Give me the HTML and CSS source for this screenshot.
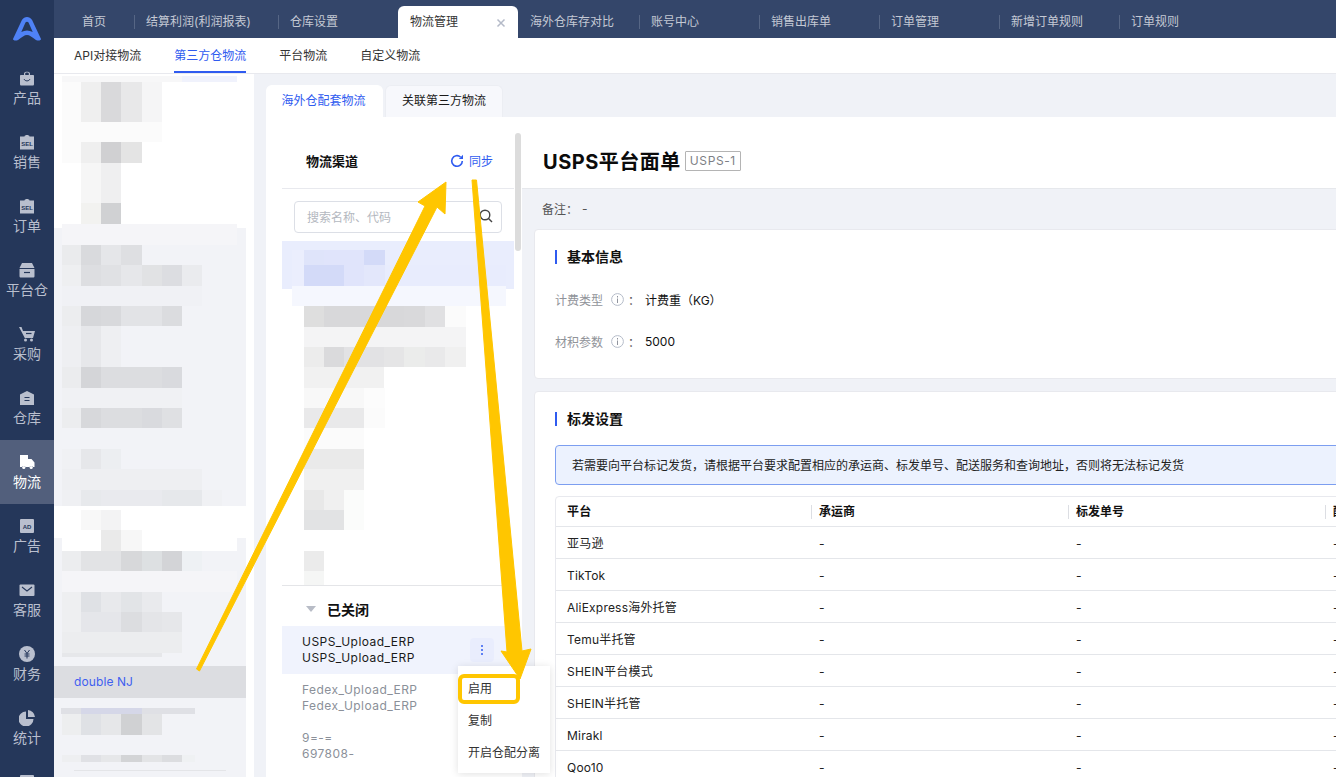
FILE: index.html
```html
<!DOCTYPE html>
<html lang="zh">
<head>
<meta charset="utf-8">
<title>物流管理</title>
<link rel="stylesheet" href="styles.css">
</head>
<body>
<div class="page">
  <aside class="sidebar">
    <div class="logo">
      <svg width="28" height="25" viewBox="3 0 22 25" preserveAspectRatio="none"><path d="M3 23 C3 24.500 5 25 7 24 C10 21 12 19 14 19 C16 19 18 21 21 24 C23 25 25 24.500 25 23 L18 4 C16 0 12 0 10 4 Z M9.500 16 L12.800 6.500 C13.300 5.500 14.700 5.500 15.200 6.500 L18.500 16 C17 15 15.500 14.500 14 14.500 C12.500 14.500 11 15 9.500 16 Z" fill="#4f82f7" fill-rule="evenodd"/></svg>
    </div>
    <a class="nav-item">
      <svg class="nav-icon" viewBox="0 0 16 16"><path d="M5 5 V3.500 C5 1 11 1 11 3.500 V5 H14 C14.600 5 15 5.400 15 6 V14 C15 15 14.500 15.500 13.500 15.500 H2.500 C1.500 15.500 1 15 1 14 V6 C1 5.400 1.400 5 2 5 Z M6.200 5 H9.800 V3.500 C9.800 2.300 6.200 2.300 6.200 3.500 Z" fill="currentColor" fill-rule="evenodd"/><path d="M5 9 C6 11.500 10 11.500 11 9" stroke="#25375a" fill="none"/></svg>
      <span>产品</span>
    </a>
    <a class="nav-item">
      <svg class="nav-icon" viewBox="0 0 16 16"><path d="M5.500 2.500 C5.500 .5 10.500 .5 10.500 2.500 H15 V15.500 H1 V2.500 Z" fill="currentColor"/><text x="8" y="11.500" class="icon-text">SEL</text></svg>
      <span>销售</span>
    </a>
    <a class="nav-item">
      <svg class="nav-icon" viewBox="0 0 16 16"><path d="M5.500 2.500 C5.500 .5 10.500 .5 10.500 2.500 H15 V15.500 H1 V2.500 Z" fill="currentColor"/><text x="8" y="11.500" class="icon-text">SEL</text></svg>
      <span>订单</span>
    </a>
    <a class="nav-item">
      <svg class="nav-icon" viewBox="0 0 16 16"><path d="M3 1 H13 L15.500 6 H.5 Z M.5 7 H15.500 V14 C15.500 15 15 15.500 14 15.500 H2 C1 15.500 .5 15 .5 14 Z" fill="currentColor"/><path d="M5 10.500 H11" stroke="#25375a" stroke-width="1.200"/></svg>
      <span>平台仓</span>
    </a>
    <a class="nav-item">
      <svg class="nav-icon" viewBox="0 0 16 16"><path d="M0 1 H2.500 L4 5 H16 L14 12 H5.800 Z" fill="currentColor"/><circle cx="6.500" cy="14" r="1.500" fill="currentColor"/><circle cx="12.500" cy="14" r="1.500" fill="currentColor"/><path d="M7 7.500 H12.500" stroke="#25375a" stroke-width="1.200"/></svg>
      <span>采购</span>
    </a>
    <a class="nav-item">
      <svg class="nav-icon" viewBox="0 0 16 16"><path d="M8 1 L15 4.500 V15 H1 V4.500 Z" fill="currentColor"/><path d="M5.500 7.500 H10.500 M5.500 10.500 H10.500" stroke="#25375a" stroke-width="1.100"/></svg>
      <span>仓库</span>
    </a>
    <a class="nav-item nav-active">
      <svg class="nav-icon" viewBox="0 0 16 16"><path d="M1 1 H9 V5 H12.500 L15.500 8.500 V13 H14 A2 2 0 0 0 10.500 13 H6.500 A2 2 0 0 0 3 13 H1 Z" fill="currentColor"/><circle cx="4.800" cy="13.500" r="1.600" fill="currentColor"/><circle cx="12.200" cy="13.500" r="1.600" fill="currentColor"/></svg>
      <span>物流</span>
    </a>
    <a class="nav-item">
      <svg class="nav-icon" viewBox="0 0 16 16"><rect x="1" y="1" width="14" height="14" rx="1" fill="currentColor"/><text x="8" y="10.500" class="icon-text">AD</text></svg>
      <span>广告</span>
    </a>
    <a class="nav-item">
      <svg class="nav-icon" viewBox="0 0 16 16"><rect x=".5" y="2.500" width="15" height="11.500" rx="1" fill="currentColor"/><path d="M3 5 L8 9 L13 5" stroke="#25375a" fill="none" stroke-width="1.100"/></svg>
      <span>客服</span>
    </a>
    <a class="nav-item">
      <svg class="nav-icon" viewBox="0 0 16 16"><circle cx="8" cy="8" r="8" fill="currentColor"/><path d="M5.500 4 L8 7.500 L10.500 4 M8 7.500 V12.500 M5.500 8 H10.500 M5.500 10 H10.500" stroke="#25375a" fill="none"/></svg>
      <span>财务</span>
    </a>
    <a class="nav-item">
      <svg class="nav-icon" viewBox="0 0 16 16"><path d="M7 1.500 V9 H14.500 A7.500 7.500 0 1 1 7 1.500 Z M9 0 A7.500 7.500 0 0 1 16 7 H9 Z" fill="currentColor"/></svg>
      <span>统计</span>
    </a>
    <a class="nav-item">
      <svg class="nav-icon" viewBox="0 0 16 16"><rect x="1" y="1" width="14" height="14" rx="1" fill="currentColor"/></svg>
    </a>
  </aside>

  <div class="app">
    <nav class="topbar">
      <a class="tab tab-home">首页</a>
      <a class="tab tab-wide tab-div">结算利润(利润报表)</a>
      <a class="tab tab-div">仓库设置</a>
      <a class="tab tab-active">物流管理
        <svg class="tab-close" width="10" height="10" viewBox="0 0 10 10"><path d="M1.500 1.500 L8.500 8.500 M8.500 1.500 L1.500 8.500" stroke="#b4bac8" stroke-width="1.500"/></svg>
      </a>
      <a class="tab">海外仓库存对比</a>
      <a class="tab tab-div">账号中心</a>
      <a class="tab tab-div">销售出库单</a>
      <a class="tab tab-div">订单管理</a>
      <a class="tab tab-div">新增订单规则</a>
      <a class="tab tab-div">订单规则</a>
    </nav>
    <nav class="subnav">
      <a class="sub-item">API对接物流</a>
      <a class="sub-item sub-active">第三方仓物流</a>
      <a class="sub-item">平台物流</a>
      <a class="sub-item">自定义物流</a>
    </nav>

    <div class="content">
      <section class="tree">
        <svg class="mosaic" width="192" height="592" viewBox="54 74 192 592" aria-hidden="true">
          <rect x="54" y="74" width="192" height="154" fill="#fff"/>
          <rect x="62" y="76" width="120" height="6" fill="#f7f7f8"/><rect x="182" y="76" width="55" height="6" fill="#f0f2fc"/>
          <rect x="62" y="82" width="20" height="40" fill="#fbfbfb"/><rect x="81" y="82" width="20" height="40" fill="#efefef"/><rect x="101" y="82" width="20" height="40" fill="#d9d9db"/><rect x="121" y="82" width="21" height="40" fill="#e8e8e9"/><rect x="142" y="82" width="20" height="40" fill="#f5f5f6"/>
          <rect x="62" y="122" width="100" height="20" fill="#fbfbfb"/>
          <rect x="62" y="142" width="20" height="21" fill="#fbfbfb"/><rect x="81" y="142" width="20" height="21" fill="#efefef"/><rect x="101" y="142" width="20" height="21" fill="#d0d0d2"/><rect x="121" y="142" width="21" height="21" fill="#e4e4e4"/>
          <rect x="81" y="163" width="20" height="40" fill="#f6f6f6"/><rect x="101" y="163" width="20" height="40" fill="#efeff0"/>
          <rect x="81" y="203" width="20" height="21" fill="#f2f2f0"/><rect x="101" y="203" width="20" height="21" fill="#d0d1d3"/>
          <rect x="62" y="224" width="175" height="21" fill="#f5f5f8"/>
          <rect x="62" y="245" width="19" height="20" fill="#eaebed"/><rect x="81" y="245" width="20" height="20" fill="#d9dadd"/><rect x="101" y="245" width="20" height="20" fill="#e5e6e9"/><rect x="121" y="245" width="21" height="20" fill="#dedfe2"/>
          <rect x="62" y="265" width="19" height="21" fill="#eeeff1"/><rect x="81" y="265" width="20" height="21" fill="#dddee1"/><rect x="101" y="265" width="20" height="21" fill="#e0e1e4"/><rect x="121" y="265" width="21" height="21" fill="#e6e7ea"/><rect x="142" y="265" width="20" height="21" fill="#e1e2e4"/><rect x="162" y="265" width="20" height="21" fill="#dcdde1"/><rect x="182" y="265" width="20" height="21" fill="#eaebee"/>
          <rect x="62" y="286" width="140" height="20" fill="#f0f1f5"/>
          <rect x="62" y="306" width="19" height="20" fill="#ecedef"/><rect x="81" y="306" width="20" height="20" fill="#d6d7da"/><rect x="101" y="306" width="20" height="20" fill="#d8d9dc"/><rect x="121" y="306" width="41" height="20" fill="#e2e3e6"/><rect x="162" y="306" width="20" height="20" fill="#dbdcdf"/>
          <rect x="62" y="326" width="19" height="41" fill="#eeeff2"/><rect x="81" y="326" width="20" height="41" fill="#e6e7ea"/><rect x="101" y="326" width="20" height="41" fill="#eeeff2"/>
          <rect x="62" y="367" width="19" height="21" fill="#ebecee"/><rect x="81" y="367" width="20" height="21" fill="#d4d5d8"/><rect x="101" y="367" width="61" height="21" fill="#dcdde0"/><rect x="162" y="367" width="20" height="21" fill="#d9dade"/>
          <rect x="62" y="388" width="120" height="20" fill="#f0f1f4"/>
          <rect x="62" y="408" width="19" height="20" fill="#ecedef"/><rect x="81" y="408" width="20" height="20" fill="#d7d8db"/><rect x="101" y="408" width="41" height="20" fill="#dcdde0"/><rect x="142" y="408" width="20" height="20" fill="#d9dade"/><rect x="162" y="408" width="20" height="20" fill="#dfe0e3"/>
          <rect x="62" y="449" width="19" height="20" fill="#f0f1f4"/><rect x="81" y="449" width="20" height="20" fill="#e6e7ea"/><rect x="101" y="449" width="20" height="20" fill="#eceef1"/>
          <rect x="62" y="469" width="140" height="21" fill="#eeeff2"/>
          <rect x="62" y="490" width="19" height="16" fill="#eff0f3"/><rect x="81" y="490" width="20" height="16" fill="#e7e9ec"/><rect x="101" y="490" width="61" height="16" fill="#e9eaee"/><rect x="162" y="490" width="40" height="16" fill="#e6e8eb"/><rect x="202" y="490" width="20" height="16" fill="#f0f1f4"/>
          <rect x="54" y="506" width="192" height="32" fill="#fff"/>
          <rect x="81" y="510" width="20" height="20" fill="#f8f8f8"/><rect x="101" y="510" width="20" height="20" fill="#f3f3f4"/>
          <rect x="62" y="538" width="175" height="13" fill="#fff"/>
          <rect x="101" y="530" width="20" height="21" fill="#eaeaea"/><rect x="121" y="530" width="21" height="21" fill="#f7f7f7"/>
          <rect x="62" y="551" width="19" height="20" fill="#ecedef"/><rect x="81" y="551" width="40" height="20" fill="#e2e3e5"/><rect x="121" y="551" width="21" height="20" fill="#d7d8da"/><rect x="142" y="551" width="20" height="20" fill="#dde0e2"/><rect x="162" y="551" width="20" height="20" fill="#d3d4d7"/><rect x="182" y="551" width="20" height="20" fill="#eef1f4"/>
          <rect x="62" y="571" width="175" height="21" fill="#f5f5f8"/>
          <rect x="62" y="592" width="19" height="20" fill="#eeeff1"/><rect x="81" y="592" width="20" height="20" fill="#dfe1e5"/><rect x="101" y="592" width="20" height="20" fill="#e8e9ec"/><rect x="121" y="592" width="21" height="20" fill="#e2e4e7"/><rect x="142" y="592" width="20" height="20" fill="#e9eaed"/>
          <rect x="62" y="612" width="19" height="20" fill="#eeeff1"/><rect x="81" y="612" width="40" height="20" fill="#e5e6ea"/><rect x="121" y="612" width="21" height="20" fill="#dcdde0"/><rect x="142" y="612" width="20" height="20" fill="#e4e5e8"/><rect x="162" y="612" width="20" height="20" fill="#e6e7ea"/>
          <rect x="62" y="632" width="120" height="21" fill="#ecedef"/><rect x="62" y="653" width="100" height="4" fill="#e6e7ea"/>
        </svg>
        <div class="tree-row">double NJ</div>
        <svg class="mosaic" width="192" height="79" viewBox="54 698 192 79" aria-hidden="true">
          <rect x="61" y="708" width="134" height="6" fill="#dfe0e5"/><rect x="81" y="708" width="61" height="6" fill="#d5d7e8"/>
          <rect x="62" y="714" width="19" height="21" fill="#edeeef"/><rect x="81" y="714" width="20" height="21" fill="#dfe1e5"/><rect x="101" y="714" width="20" height="21" fill="#e6e7e9"/><rect x="121" y="714" width="21" height="21" fill="#d0d1d3"/><rect x="142" y="714" width="20" height="21" fill="#e3e4e6"/>
          <rect x="62" y="755" width="19" height="7" fill="#eeeff1"/><rect x="81" y="755" width="20" height="7" fill="#e0e1e5"/><rect x="101" y="755" width="20" height="7" fill="#e6e7e9"/><rect x="121" y="755" width="21" height="7" fill="#d3d4d6"/><rect x="142" y="755" width="20" height="7" fill="#e3e4e6"/><rect x="162" y="755" width="20" height="7" fill="#dcdde0"/><rect x="182" y="755" width="13" height="7" fill="#eff1f3"/>
          <rect x="74" y="770" width="152" height="1" fill="#e4e5e8"/>
        </svg>
      </section>

      <main class="main">
        <div class="panel-tabs">
          <a class="ptab ptab-active">海外仓配套物流</a>
          <a class="ptab">关联第三方物流</a>
        </div>
        <div class="panel">
          <section class="channels">
            <div class="scrollbar"></div>
            <header class="ch-head">
              <h3 class="ch-title">物流渠道</h3>
              <a class="sync">
                <svg width="14" height="14" viewBox="0 0 14 14"><path d="M12.300 7 A5.300 5.300 0 1 1 10.500 3" fill="none" stroke="#2f5bf0" stroke-width="1.600"/><path d="M13 .8 V5 H8.800 Z" fill="#2f5bf0"/></svg>
                同步
              </a>
            </header>
            <div class="search">
              <span class="search-ph">搜索名称、代码</span>
              <svg width="14" height="14" viewBox="0 0 14 14"><circle cx="6" cy="6" r="4.800" fill="none" stroke="#444" stroke-width="1.400"/><path d="M9.500 9.500 L13 13" stroke="#444" stroke-width="1.400"/></svg>
            </div>
            <svg class="mosaic ch-mosaic" width="232" height="344" viewBox="282 241 232 344" aria-hidden="true">
              <rect x="282" y="241" width="232" height="48" fill="#e9edfd"/>
              <rect x="292" y="250" width="12" height="36" fill="#ebeefd"/>
              <rect x="304" y="250" width="20" height="15" fill="#dfe4fa"/><rect x="324" y="250" width="40" height="15" fill="#e0e4fb"/><rect x="364" y="250" width="21" height="15" fill="#d3daf8"/>
              <rect x="304" y="265" width="40" height="21" fill="#d3daf8"/><rect x="344" y="265" width="20" height="21" fill="#e0e4fb"/><rect x="364" y="265" width="21" height="21" fill="#e3e7fb"/><rect x="385" y="265" width="121" height="21" fill="#e8ecfd"/>
              <rect x="292" y="286" width="214" height="20" fill="#f5f7fe"/>
              <rect x="304" y="306" width="20" height="21" fill="#dedede"/><rect x="324" y="306" width="80" height="21" fill="#d8d8da"/><rect x="404" y="306" width="21" height="21" fill="#d9d9db"/><rect x="425" y="306" width="20" height="21" fill="#e0e0e2"/><rect x="445" y="306" width="21" height="21" fill="#fbfbfb"/>
              <rect x="304" y="327" width="162" height="20" fill="#f4f4f5"/>
              <rect x="304" y="347" width="20" height="20" fill="#ececec"/><rect x="324" y="347" width="20" height="20" fill="#dadadc"/><rect x="344" y="347" width="40" height="20" fill="#e2e2e4"/><rect x="384" y="347" width="20" height="20" fill="#e5e5e6"/><rect x="404" y="347" width="21" height="20" fill="#ebeceb"/><rect x="425" y="347" width="20" height="20" fill="#e9e9ea"/><rect x="445" y="347" width="21" height="20" fill="#f0f0f0"/>
              <rect x="304" y="367" width="80" height="21" fill="#f1f1f1"/>
              <rect x="304" y="388" width="60" height="20" fill="#f8f8f8"/><rect x="364" y="388" width="21" height="20" fill="#fcfcfc"/>
              <rect x="304" y="408" width="60" height="20" fill="#e9e9ea"/><rect x="364" y="408" width="21" height="20" fill="#fbfbfb"/>
              <rect x="304" y="428" width="60" height="21" fill="#fbfbfb"/>
              <rect x="304" y="449" width="60" height="20" fill="#eaeaea"/>
              <rect x="304" y="469" width="60" height="21" fill="#f0f0f0"/>
              <rect x="304" y="490" width="20" height="20" fill="#e8e8e8"/><rect x="324" y="490" width="20" height="20" fill="#f0f0f0"/><rect x="344" y="490" width="20" height="20" fill="#fbfcfb"/>
              <rect x="304" y="510" width="40" height="20" fill="#e2e3e4"/><rect x="344" y="510" width="20" height="20" fill="#fbfcfb"/>
              <rect x="304" y="551" width="20" height="20" fill="#ebebeb"/>
              <rect x="304" y="571" width="20" height="14" fill="#f5f6f5"/>
            </svg>
            <div class="closed-head">
              <svg width="10" height="6" viewBox="0 0 10 6"><path d="M0 0 H10 L5 6 Z" fill="#b8bcc6"/></svg>
              <strong>已关闭</strong>
            </div>
            <div class="ch-row ch-row-on">
              <div>USPS_Upload_ERP<br>USPS_Upload_ERP</div>
              <span class="more"><i></i><i></i><i></i></span>
            </div>
            <div class="ch-row ch-row-off">
              <div>Fedex_Upload_ERP<br>Fedex_Upload_ERP</div>
            </div>
            <div class="ch-row ch-row-off">
              <div>9=-=<br>697808-</div>
            </div>
            <ul class="menu">
              <li>启用</li>
              <li>复制</li>
              <li>开启仓配分离</li>
            </ul>
          </section>

          <section class="detail">
            <header class="d-head">
              <h1 class="d-title">USPS平台面单</h1>
              <span class="d-tag">USPS-1</span>
            </header>
            <div class="d-note"><span>备注：</span><span class="d-note-val">-</span></div>
            <div class="card card-basic">
              <h2 class="sec-title">基本信息</h2>
              <div class="field">
                <span class="f-label">计费类型</span>
                <svg class="info" width="13" height="13" viewBox="0 0 13 13"><circle cx="6.500" cy="6.500" r="5.900" fill="none" stroke="#b5bcc9"/><path d="M6.500 5.500 V10 M6.500 3 V4.500" stroke="#8f939d"/></svg>
                <span class="f-colon">：</span>
                <span class="f-val">计费重（KG）</span>
              </div>
              <div class="field">
                <span class="f-label">材积参数</span>
                <svg class="info" width="13" height="13" viewBox="0 0 13 13"><circle cx="6.500" cy="6.500" r="5.900" fill="none" stroke="#b5bcc9"/><path d="M6.500 5.500 V10 M6.500 3 V4.500" stroke="#8f939d"/></svg>
                <span class="f-colon">：</span>
                <span class="f-val">5000</span>
              </div>
            </div>
            <div class="card card-mark">
              <h2 class="sec-title">标发设置</h2>
              <div class="alert">若需要向平台标记发货，请根据平台要求配置相应的承运商、标发单号、配送服务和查询地址，否则将无法标记发货</div>
              <table class="grid">
                <thead>
                  <tr><th>平台</th><th>承运商</th><th>标发单号</th><th>配送服务</th></tr>
                </thead>
                <tbody>
                  <tr><td>亚马逊</td><td>-</td><td>-</td><td>-</td></tr>
                  <tr><td>TikTok</td><td>-</td><td>-</td><td>-</td></tr>
                  <tr><td>AliExpress海外托管</td><td>-</td><td>-</td><td>-</td></tr>
                  <tr><td>Temu半托管</td><td>-</td><td>-</td><td>-</td></tr>
                  <tr><td>SHEIN平台模式</td><td>-</td><td>-</td><td>-</td></tr>
                  <tr><td>SHEIN半托管</td><td>-</td><td>-</td><td>-</td></tr>
                  <tr><td>Mirakl</td><td>-</td><td>-</td><td>-</td></tr>
                  <tr><td>Qoo10</td><td>-</td><td>-</td><td>-</td></tr>
                </tbody>
              </table>
            </div>
          </section>
        </div>
      </main>
    </div>
  </div>

  <svg class="annot" width="1336" height="777" viewBox="0 0 1336 777" aria-hidden="true">
    <path d="M196.500 669 L199.500 671 L437 207 L445 214 L446 182 L418 202 L425 206 Z" fill="#ffc600" stroke="#ffc600" stroke-linejoin="round"/>
    <path d="M472 180 H476.500 L522 651 L531 649 L520 679 L501 651 L507 652 Z" fill="#ffc600" stroke="#ffc600" stroke-linejoin="round"/>
    <rect x="460" y="676" width="58" height="26" rx="4" fill="none" stroke="#ffc600" stroke-width="4"/>
  </svg>
</div>
</body>
</html>
```

FILE: styles.css
```css
* { box-sizing: border-box; }
html, body { margin: 0; padding: 0; height: 100%; overflow: hidden; }
body {
  font-family: Inter, "Noto Sans CJK SC", sans-serif;
  font-size: 12px;
  color: #1a1a1a;
  background: #fff;
}
a { text-decoration: none; color: inherit; cursor: pointer; }
h1, h2, h3 { margin: 0; }

.page { position: relative; display: flex; width: 1336px; height: 777px; overflow: hidden; }

/* sidebar */
.sidebar {
  flex: 0 0 54px;
  background: #25375a;
  color: #b9bfce;
  overflow: hidden;
}
.logo { height: 56px; display: flex; justify-content: center; padding-top: 16px; }
.nav-item {
  height: 64px;
  display: flex;
  flex-direction: column;
  align-items: center;
  padding-top: 14px;
  font-size: 14px;
  line-height: 20px;
  gap: 2px;
}
.nav-active { background: #525f7c; color: #fff; }
.nav-icon { width: 16px; height: 16px; display: block; }
.icon-text { font: 700 6px "Liberation Sans", sans-serif; fill: #25375a; text-anchor: middle; }

/* top */
.app { flex: 1; min-width: 0; display: flex; flex-direction: column; }
.topbar {
  flex: 0 0 38px;
  display: flex;
  align-items: flex-end;
  background: #34466a;
  padding-left: 16px;
  color: #c4c9d4;
}
.tab {
  position: relative;
  flex: 0 0 120px;
  height: 32px;
  padding-left: 12px;
  line-height: 32px;
  font-size: 12px;
}
.tab-home { flex-basis: 64px; }
.tab-wide { flex-basis: 144px; }
.tab-active + .tab { flex-basis: 121px; }
.tab-div::before {
  content: "";
  position: absolute;
  left: 0;
  top: 9px;
  height: 14px;
  width: 1px;
  background: #566685;
}
.tab-active { background: #fff; color: #333; border-radius: 6px 6px 0 0; }
.tab-close { position: absolute; right: 12px; top: 12px; }

.subnav {
  flex: 0 0 36px;
  display: flex;
  gap: 33px;
  padding-left: 20px;
  background: #fff;
  border-bottom: 1px solid #e8e9ee;
}
.sub-item { height: 35px; line-height: 36px; font-size: 12px; color: #333; }
.sub-active { color: #2f5bf0; border-bottom: 2px solid #2f5bf0; }

.content { flex: 1; min-height: 0; display: flex; }

/* tree */
.tree { flex: 0 0 192px; background: #f2f3f7; }
.mosaic { display: block; }
.tree-row {
  height: 32px;
  line-height: 32px;
  padding-left: 20px;
  background: #dcdde1;
  color: #3f5ff0;
  letter-spacing: .1px;
}

/* main */
.main {
  flex: 0 0 1082px;
  margin-left: 8px;
  background: #f0f2f7;
  padding: 11px 0 0 12px;
  overflow: hidden;
}
.panel-tabs { display: flex; gap: 2px; height: 32px; }
.ptab {
  width: 118px;
  height: 32px;
  line-height: 30px;
  text-align: center;
  background: #f7f8fc;
  border: 1px solid #eceef3;
  border-bottom: 0;
  border-radius: 6px 6px 0 0;
}
.ptab-active { width: 117px; padding-right: 2px; background: #fff; border-color: #fff; color: #2f5bf0; }
.panel { display: flex; background: #fff; height: 660px; }

/* channels */
.channels {
  position: relative;
  flex: 0 0 256px;
  padding: 0 8px 0 16px;
  background: #fff;
}
.scrollbar {
  position: absolute;
  right: 1px;
  top: 16px;
  width: 6px;
  height: 118px;
  border-radius: 3px;
  background: #dcdcdc;
}
.ch-head {
  height: 72px;
  display: flex;
  align-items: center;
  justify-content: space-between;
  padding: 16px 21px 0 24px;
  border-bottom: 1px solid #e8e9ee;
}
.ch-title { font-size: 13px; font-weight: 700; color: #111; }
.sync { display: flex; align-items: center; gap: 5px; color: #2f5bf0; }
.search {
  margin: 12px 12px 8px;
  height: 32px;
  display: flex;
  align-items: center;
  justify-content: space-between;
  padding: 0 8px 2px 12px;
  border: 1px solid #dcdfe6;
  border-radius: 4px;
}
.search-ph { color: #b4b8c0; }
.closed-head {
  height: 41px;
  display: flex;
  align-items: center;
  gap: 11px;
  padding: 5px 0 0 24px;
  border-top: 1px solid #e4e5e8;
}
.closed-head strong { font-size: 14px; font-weight: 700; color: #111; }
.ch-row {
  height: 48px;
  display: flex;
  align-items: center;
  justify-content: space-between;
  padding: 0 20px;
  line-height: 16px;
  letter-spacing: .45px;
}
.ch-row > div { margin-top: -1px; }
.ch-row-on { background: #f0f3fd; color: #1a1a1a; }
.ch-row-off { color: #8b9099; }
.more {
  width: 24px;
  height: 24px;
  display: flex;
  flex-direction: column;
  align-items: center;
  justify-content: center;
  gap: 2px;
  border-radius: 4px;
  background: #e9edfd;
}
.more i { width: 2px; height: 2px; border-radius: 50%; background: #2f5bf0; }
.menu {
  position: absolute;
  left: 192px;
  top: 549px;
  width: 92px;
  height: 107px;
  margin: 0;
  padding: 6px 0 0;
  list-style: none;
  background: #fff;
  box-shadow: 0 1px 8px rgba(0, 0, 0, .12);
  color: #333;
}
.menu li { height: 32px; line-height: 34px; padding-left: 10px; white-space: nowrap; }

/* detail */
.detail { flex: 1; min-width: 0; background: #f0f2f7; overflow: hidden; }
.d-head {
  height: 72px;
  display: flex;
  align-items: center;
  gap: 4px;
  padding: 18px 0 0 21px;
  background: #fff;
  border-bottom: 1px solid #e6e8ec;
}
.d-title { font-size: 20px; font-weight: 700; color: #0b0b0b; line-height: 28px; letter-spacing: .5px; }
.d-tag {
  height: 20px;
  line-height: 17px;
  padding: 0 4px;
  margin-top: -2px;
  border: 1px solid #b4b4b4;
  border-radius: 1px;
  color: #7d7f85;
  letter-spacing: .6px;
}
.d-note { height: 40px; padding: 0 0 2px 20px; display: flex; align-items: center; color: #555; }
.d-note-val { margin-left: 4px; }
.card {
  width: 1000px;
  margin-left: 12px;
  background: #fff;
  border: 1px solid #e8e9ee;
  border-radius: 4px;
  padding: 20px;
}
.card-basic { height: 150px; margin-bottom: 12px; }
.sec-title {
  height: 14px;
  line-height: 14px;
  padding-left: 10px;
  border-left: 2px solid #2f5bf0;
  font-size: 14px;
  font-weight: 700;
  color: #111;
}
.field { display: flex; align-items: center; height: 42px; }
.sec-title + .field { margin-top: 14px; }
.f-label { color: #909399; width: 48px; }
.info { margin-left: 8px; }
.f-colon { margin-left: 4px; width: 17px; color: #555; }
.f-val { color: #111; }
.alert {
  margin-top: 19px;
  height: 40px;
  line-height: 40px;
  padding-left: 16px;
  background: #ecf2fe;
  border: 1px solid #7c9ef0;
  border-radius: 4px;
  color: #222;
  white-space: nowrap;
}
.grid {
  margin-top: 11px;
  width: 1028px;
  table-layout: fixed;
  border-collapse: separate;
  border-spacing: 0;
  border: 1px solid #e8e9ee;
  border-radius: 4px 0 0 0;
}
.grid th, .grid td {
  width: 257px;
  height: 32px;
  padding: 0 0 0 8px;
  text-align: left;
  font-size: 12px;
  line-height: 16px;
  border-bottom: 1px solid #e4e6ea;
  color: #222;
  white-space: nowrap;
}
.grid td { padding-top: 2px; }
.grid th { height: 30px; font-weight: 700; color: #111; position: relative; }
.grid th:first-child, .grid td:first-child { width: 255px; padding-left: 11px; letter-spacing: .2px; }
.grid th + th::before {
  content: "";
  position: absolute;
  left: 0;
  top: 8px;
  height: 14px;
  width: 1px;
  background: #dcdee3;
}

/* annotations */
.annot { position: absolute; left: 0; top: 0; pointer-events: none; }
```
